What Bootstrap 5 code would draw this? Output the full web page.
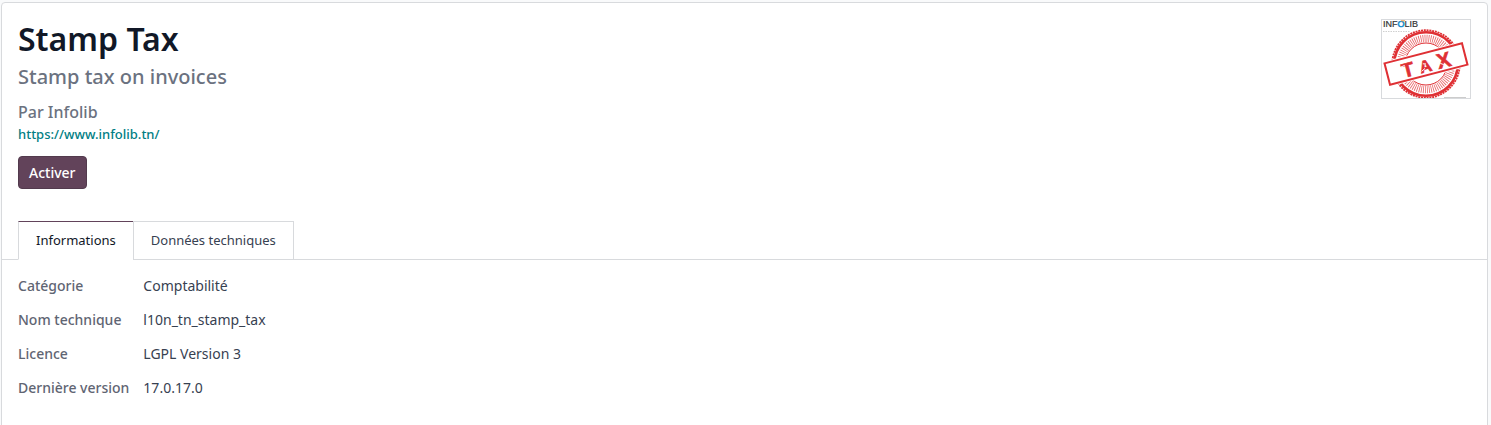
<!DOCTYPE html>
<html lang="fr">
<head>
<meta charset="utf-8">
<meta name="viewport" content="width=device-width, initial-scale=1">
<title>Stamp Tax</title>
<link href="https://cdn.jsdelivr.net/npm/bootstrap@5.3.0/dist/css/bootstrap.min.css" rel="stylesheet">
<style>
  body { background: #f9fafb; color: #374151; font-family: "Noto Sans", "Open Sans", sans-serif; font-size: 14px; line-height: 20px; }
  .sheet { margin: 2px 3px 0 1px; min-height: calc(100vh + 16px); border: 1px solid #d8dadd; border-radius: 4px; background: #fff; }
  .app-title { margin-bottom: 6px; font-size: 32px; line-height: 40px; font-weight: 600; color: #111827; }
  .app-summary { margin-bottom: 12px; font-size: 20px; line-height: 24px; font-weight: 500; color: #6b7280; }
  .app-author { font-size: 16px; line-height: 22px; font-weight: 500; color: #6b7280; }
  .app-site { margin-bottom: 10px; font-size: 13px; line-height: 23px; font-weight: 500; color: #017e84; text-decoration: none; }
  .btn-activate { --bs-btn-color: #fff; --bs-btn-bg: #62435a; --bs-btn-border-color: #523a4d; --bs-btn-hover-color: #fff; --bs-btn-hover-bg: #523a4d; --bs-btn-hover-border-color: #523a4d; --bs-btn-font-size: 14px; --bs-btn-font-weight: 500; --bs-btn-padding-x: 10px; --bs-btn-padding-y: 6px; --bs-btn-border-radius: 4px; line-height: 19px; }
  .app-icon { width: 90px; height: 80px; border: 1px solid #d8dadd; }
  .nav-tabs { margin-top: 32px; --bs-nav-tabs-border-color: #d8dadd; --bs-nav-tabs-border-radius: 0; --bs-nav-link-color: #374151; --bs-nav-link-hover-color: #111827; --bs-nav-tabs-link-active-color: #111827; --bs-nav-tabs-link-active-bg: #fff; --bs-nav-link-padding-y: 9px; --bs-nav-link-padding-x: 17px; --bs-nav-link-font-size: 13px; line-height: 19px; }
  .nav-tabs .nav-link { border-color: #d8dadd; }
  .nav-tabs .nav-link.active { border-color: #62435a #d8dadd #fff; }
  .nav-tabs .nav-item + .nav-item { margin-left: -1px; }
  .info-grid { display: grid; grid-template-columns: max-content 1fr; column-gap: 14px; row-gap: 14px; }
  .info-grid dt { font-weight: 500; color: #5f6573; }
</style>
</head>
<body>
<main class="sheet">
  <header class="d-flex justify-content-between align-items-start p-3 pb-0">
    <div>
      <h1 class="app-title">Stamp Tax</h1>
      <h2 class="app-summary">Stamp tax on invoices</h2>
      <h3 class="app-author mb-0">Par Infolib</h3>
      <a class="app-site d-block" href="https://www.infolib.tn/">https://www.infolib.tn/</a>
      <button type="button" class="btn btn-activate">Activer</button>
    </div>
    <svg class="app-icon flex-shrink-0" viewBox="0 0 88 78" role="img" aria-label="Infolib Tax">
      <g fill="none" stroke="#df3034">
        <circle cx="44" cy="44" r="33.800" stroke-width="1.800" stroke-dasharray="2 .8"/>
        <circle cx="44" cy="44" r="31.800" stroke-width="2.600"/>
        <circle cx="44" cy="44" r="25.500" stroke-width="7.500" stroke-dasharray=".8 1.200" opacity=".75"/>
        <circle cx="44" cy="44" r="21" stroke-width="1"/>
      </g>
      <g transform="rotate(-14.5 44 44)">
        <rect x="2" y="31" width="84" height="26" fill="#fff"/>
        <rect x="4" y="33" width="80" height="22" fill="#fff" stroke="#df3034" stroke-width="2"/>
        <g fill="#df3034" stroke="#df3034" stroke-width=".6" font-family="Liberation Sans, sans-serif" font-weight="700" text-anchor="middle">
          <text x="25" y="52" font-size="20">T</text><text x="43" y="52" font-size="17">A</text><text x="62" y="52" font-size="21">X</text>
        </g>
        <path d="M17 41l6-1M38 50l4-2M58 47l3 2M41 43l3 1" stroke="#fff" stroke-width=".9"/>
      </g>
      <text x="1" y="7" font-family="Liberation Sans, sans-serif" font-size="9" fill="#333" stroke="#333" stroke-width=".2">INF<tspan fill="#1b8fd0" stroke="#1b8fd0" stroke-width=".6">O</tspan>LIB</text>
      <path d="M19 .8h4" fill="none" stroke="#f3a04a" stroke-width="1"/>
      <path d="M1 11.500h27" stroke="#bbb" stroke-width=".7" stroke-dasharray="1.500 1"/>
      <path d="M62 77.500h22" stroke="#ccc"/>
    </svg>
  </header>
  <ul class="nav nav-tabs px-3" role="tablist">
    <li class="nav-item" role="presentation"><button class="nav-link active" id="info-tab" type="button" role="tab" data-bs-toggle="tab" data-bs-target="#info" aria-controls="info" aria-selected="true">Informations</button></li>
    <li class="nav-item" role="presentation"><button class="nav-link" id="tech-tab" type="button" role="tab" data-bs-toggle="tab" data-bs-target="#tech" aria-controls="tech" aria-selected="false">Données techniques</button></li>
  </ul>
  <div class="tab-content p-3">
    <div class="tab-pane active" id="info" role="tabpanel" aria-labelledby="info-tab">
      <dl class="info-grid mb-0">
        <dt>Catégorie</dt><dd class="mb-0">Comptabilité</dd>
        <dt>Nom technique</dt><dd class="mb-0">l10n_tn_stamp_tax</dd>
        <dt>Licence</dt><dd class="mb-0">LGPL Version 3</dd>
        <dt>Dernière version</dt><dd class="mb-0">17.0.17.0</dd>
      </dl>
    </div>
    <div class="tab-pane" id="tech" role="tabpanel" aria-labelledby="tech-tab"></div>
  </div>
</main>
<script src="https://cdn.jsdelivr.net/npm/bootstrap@5.3.0/dist/js/bootstrap.bundle.min.js"></script>
</body>
</html>
